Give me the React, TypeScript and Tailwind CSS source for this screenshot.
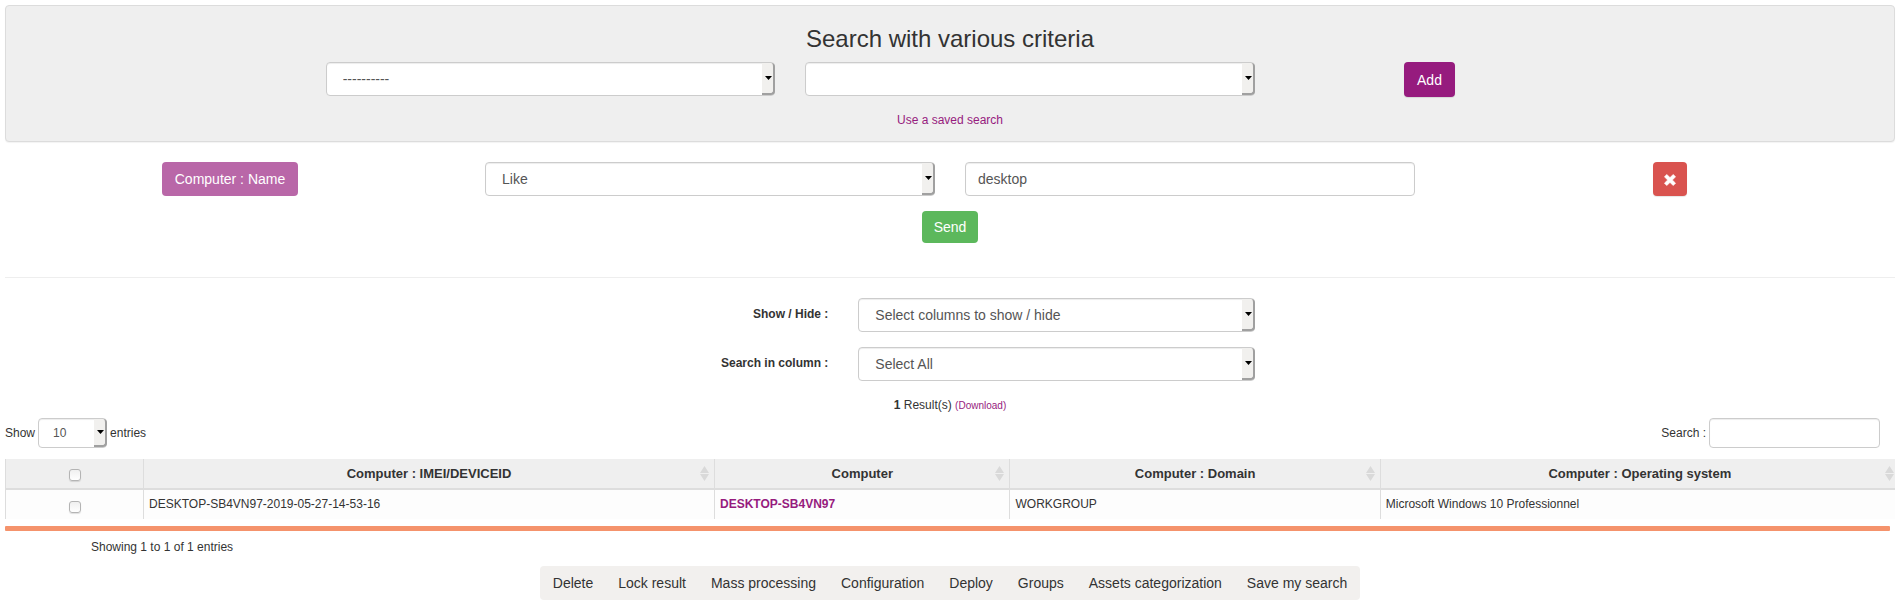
import type { ReactNode, SelectHTMLAttributes } from "react";

const control =
  "w-full rounded border border-[#ccc] bg-white text-[#555] shadow-[inset_0_1px_1px_rgba(0,0,0,0.075)] outline-none focus:border-[#961b7e]";

type SelectBoxProps = SelectHTMLAttributes<HTMLSelectElement> & { children?: ReactNode };

function SelectBox({ className = "h-[34px] pl-4 text-sm", children, ...rest }: SelectBoxProps) {
  return (
    <span className="relative block">
      <select {...rest} className={`${control} block appearance-none pr-4 ${className}`}>
        {children}
      </select>
      <span className="pointer-events-none absolute inset-y-px right-0 flex w-[13px] items-center justify-center rounded-r-sm border-r-2 border-b-2 border-[#a0a0a0] bg-[#f1f0ee] pl-[2px]">
        <svg width="7" height="4" viewBox="0 0 7 4" aria-hidden="true">
          <path d="M0 0h7L3.5 4z" fill="#000" />
        </svg>
      </span>
    </span>
  );
}

function SortIcon() {
  return (
    <svg className="absolute top-[7px] right-[5px]" width="9" height="15" viewBox="0 0 9 15" aria-hidden="true">
      <path d="M4.5 0L9 7H0zM0 8h9l-4.500 7z" fill="#d9d9d9" />
    </svg>
  );
}

function Tick({ label }: { label: string }) {
  return (
    <input
      type="checkbox"
      aria-label={label}
      className="block size-3 appearance-none rounded-[3px] border border-[#b4b4b4] bg-linear-to-b from-[#f0f0f0] to-white shadow-[0_1px_1px_rgba(0,0,0,0.12)] checked:bg-[#961b7e]"
    />
  );
}

const headings = ["Computer : IMEI/DEVICEID", "Computer", "Computer : Domain", "Computer : Operating system"];
const actions = [
  "Delete",
  "Lock result",
  "Mass processing",
  "Configuration",
  "Deploy",
  "Groups",
  "Assets categorization",
  "Save my search",
];

export default function App() {
  return (
    <main className="overflow-hidden bg-white p-[5px] font-['Liberation_Sans',Arial,sans-serif] text-xs leading-[17px] text-[#333]">
      <section className="rounded border border-[#dcdcdc] bg-[#efefef] pt-5 pb-3 shadow-[0_1px_1px_rgba(0,0,0,0.05)]">
        <h1 className="text-center text-2xl leading-[26px]">Search with various criteria</h1>
        <div className="-mx-[15px] mt-[10px] grid grid-cols-12">
          <div className="col-span-3 col-start-3 px-[15px]">
            <SelectBox aria-label="Table">
              <option>----------</option>
            </SelectBox>
          </div>
          <div className="col-span-3 px-[15px]">
            <SelectBox aria-label="Field">
              <option></option>
            </SelectBox>
          </div>
          <div className="col-span-2 flex justify-center">
            <button className="h-[35px] rounded bg-[#961b7e] px-[13px] text-sm text-white shadow-[0_1px_1px_rgba(0,0,0,0.1)]">
              Add
            </button>
          </div>
        </div>
        <p className="mt-[15px] text-center">
          <a href="#saved" className="text-[#961b7e]">
            Use a saved search
          </a>
        </p>
      </section>

      <form onSubmit={(event) => event.preventDefault()}>
        <div className="-mx-[15px] mt-5 grid grid-cols-4">
          <div className="flex justify-center">
            <button type="button" className="h-[34px] rounded bg-[#b967a8] px-[13px] text-sm text-white">
              Computer : Name
            </button>
          </div>
          <div className="px-[15px]">
            <SelectBox aria-label="Operator">
              <option>Like</option>
            </SelectBox>
          </div>
          <div className="px-[15px]">
            <input aria-label="Value" defaultValue="desktop" className={`${control} block h-[34px] px-3 text-sm`} />
          </div>
          <div className="flex justify-center">
            <button
              type="button"
              aria-label="Remove"
              className="flex h-[34px] w-[34px] items-center justify-center rounded bg-[#d9534f] pt-[2px] shadow-[0_1px_1px_rgba(0,0,0,0.1)]"
            >
              <svg width="12" height="12" viewBox="0 0 12 12" aria-hidden="true">
                <path
                  d="M2.8.4L6 3.6 9.2.4l2.4 2.4L8.4 6l3.2 3.2-2.4 2.4L6 8.4l-3.2 3.2L.4 9.2 3.6 6 .4 2.8z"
                  fill="#fff"
                  stroke="#fff"
                  strokeWidth=".6"
                  strokeLinejoin="round"
                />
              </svg>
            </button>
          </div>
        </div>
        <div className="mt-[15px] flex justify-center">
          <button className="h-8 rounded bg-[#5cb85c] px-3 text-sm text-white">Send</button>
        </div>
      </form>

      <hr className="mt-[34px] border-[#eee]" />

      <div className="-mx-[15px] mt-5 grid grid-cols-12">
        <div className="col-span-8 col-start-3 grid grid-cols-12 gap-y-[15px]">
          <label htmlFor="columns" className="col-span-5 px-[15px] pt-2 text-right font-bold">
            Show / Hide :
          </label>
          <div className="col-span-4 px-[15px]">
            <SelectBox id="columns">
              <option>Select columns to show / hide</option>
            </SelectBox>
          </div>
          <label htmlFor="scope" className="col-span-5 col-start-1 px-[15px] pt-2 text-right font-bold">
            Search in column :
          </label>
          <div className="col-span-4 px-[15px]">
            <SelectBox id="scope">
              <option>Select All</option>
            </SelectBox>
          </div>
        </div>
      </div>

      <p className="mt-4 text-center">
        <b>1</b> Result(s){" "}
        <a href="#download" className="text-[10px] text-[#961b7e]">
          (Download)
        </a>
      </p>

      <div className="mt-1 flex items-center justify-between pr-[15px]">
        <label className="flex items-center gap-[3px]">
          Show
          <span className="w-[69px]">
            <SelectBox className="h-[30px] pl-[14px] text-xs">
              <option>10</option>
            </SelectBox>
          </span>
          entries
        </label>
        <label className="flex items-center gap-[3px]">
          Search :
          <input type="search" className={`${control} h-[30px] max-w-[171px] px-[10px] text-xs`} />
        </label>
      </div>

      <div className="mt-[11px] overflow-hidden">
        <table className="w-[calc(100%+4px)] table-fixed border-separate border-spacing-0">
          <colgroup>
            <col className="w-[138px]" />
            <col className="w-[30.15%]" />
            <col className="w-[15.6%]" />
            <col className="w-[19.55%]" />
            <col />
          </colgroup>
          <thead>
            <tr className="bg-[#efefef]">
              <th className="h-[31px] border-b-2 border-l border-[#ddd] p-0">
                <span className="flex justify-center pt-[3px]">
                  <Tick label="Select all rows" />
                </span>
              </th>
              {headings.map((heading) => (
                <th key={heading} className="relative border-b-2 border-l border-[#ddd] p-0 text-[13px] font-bold">
                  {heading}
                  <SortIcon />
                </th>
              ))}
            </tr>
          </thead>
          <tbody>
            <tr className="bg-[#fdfdfd] align-top">
              <td className="h-[29px] border-l border-[#ddd] pt-[11px]">
                <span className="flex justify-center">
                  <Tick label="Select DESKTOP-SB4VN97" />
                </span>
              </td>
              <td className="border-l border-[#ddd] px-[5px] pt-[6px]">DESKTOP-SB4VN97-2019-05-27-14-53-16</td>
              <td className="border-l border-[#ddd] px-[5px] pt-[6px]">
                <a href="#computer" className="font-bold text-[#961b7e]">
                  DESKTOP-SB4VN97
                </a>
              </td>
              <td className="border-l border-[#ddd] px-[5px] pt-[6px]">WORKGROUP</td>
              <td className="border-l border-[#ddd] px-[5px] pt-[6px]">Microsoft Windows 10 Professionnel</td>
            </tr>
          </tbody>
        </table>
      </div>

      <div className="mt-[7px] mr-[5px] h-[5px] rounded-[1px] bg-[#f5936c]" />
      <p className="mt-2 ml-[86px]">Showing 1 to 1 of 1 entries</p>

      <nav className="mt-[10px] flex justify-center">
        <ul className="flex gap-px rounded bg-[#f2f0ee] px-px">
          {actions.map((action) => (
            <li key={action}>
              <button className="h-[34px] px-3 text-sm">{action}</button>
            </li>
          ))}
        </ul>
      </nav>
    </main>
  );
}
